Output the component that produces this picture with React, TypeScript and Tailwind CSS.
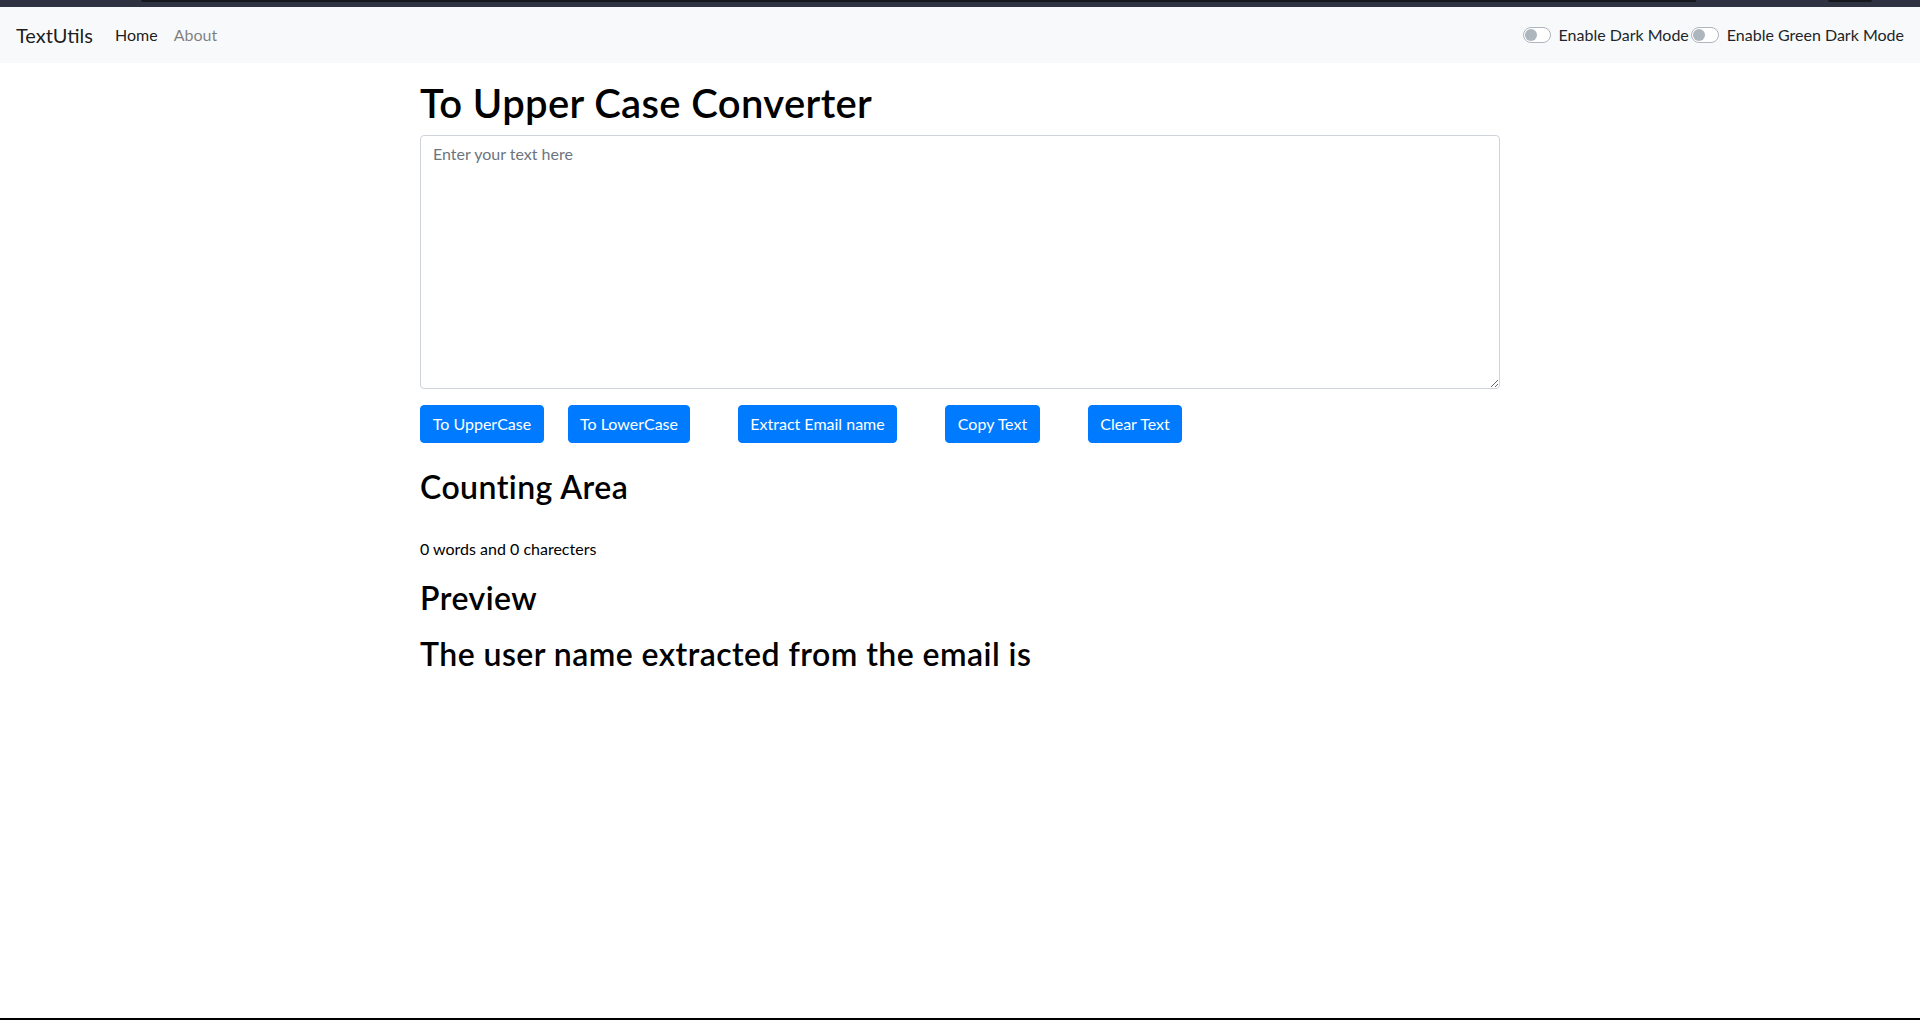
import React from 'react';

const Switch = ({ label }: { label: string }) => (
  <label className="flex items-center">
    <span className="relative block w-[28px] h-[16px] rounded-full border border-[#adb5bd] bg-white">
      <span className="absolute left-[1px] top-[1px] w-[12px] h-[12px] rounded-full bg-[#adb5bd]" />
    </span>
    <span className="ml-[8px] text-[16px] leading-[24px] text-[#212529]">{label}</span>
  </label>
);

const buttons = [
  { text: 'To UpperCase', cls: 'w-[124px]' },
  { text: 'To LowerCase', cls: 'w-[122px] ml-[24px]' },
  { text: 'Extract Email name', cls: 'w-[159px] ml-[48px]' },
  { text: 'Copy Text', cls: 'w-[95px] ml-[48px]' },
  { text: 'Clear Text', cls: 'w-[94px] ml-[48px]' },
];

export default function App() {
  return (
    <div className="min-h-[1020px] flex flex-col bg-white text-black font-['Lato','Liberation_Sans',sans-serif]">
      {/* window chrome strip */}
      <div className="h-[7px] flex bg-[#2f3241]">
        <div className="w-[141px]" />
        <div className="w-[1555px] h-[2px] bg-[#17181e] rounded-bl" />
        <div className="w-[132px]" />
        <div className="w-[44px] h-[2px] bg-[#17181e] rounded-b" />
      </div>

      <nav className="h-[56px] flex items-center px-4 bg-[#f8f9fa]">
        <a className="text-[20px] leading-[30px] text-black/90 mr-[14px]">TextUtils</a>
        <a className="px-2 text-[16px] leading-[24px] text-black/90">Home</a>
        <a className="px-2 text-[16px] leading-[24px] text-black/50">About</a>
        <div className="ml-auto flex items-center gap-[2px]">
          <Switch label="Enable Dark Mode" />
          <Switch label="Enable Green Dark Mode" />
        </div>
      </nav>

      <main className="flex-1">
        <div className="w-[1080px] mx-auto mt-4">
          <h1 className="text-[40px] leading-[48px] font-semibold tracking-[0.35px] mb-2">To Upper Case Converter</h1>
          <textarea
            className="block w-full h-[254px] border border-[#ced4da] rounded px-3 py-1.5 text-[16px] leading-[24px] placeholder:text-[#6c757d] outline-none"
            placeholder="Enter your text here"
          />
          <div className="flex mt-4">
            {buttons.map((b) => (
              <button
                key={b.text}
                className={`${b.cls} h-[38px] rounded border border-[#007bff] bg-[#007bff] text-white text-[16px] leading-[24px] whitespace-nowrap`}
              >
                {b.text}
              </button>
            ))}
          </div>

          <h2 className="mt-[25px] text-[32px] leading-[38px] font-semibold tracking-[0.45px]">Counting Area</h2>
          <p className="mt-[31px] text-[16px] leading-[24px]">0 words and 0 charecters</p>
          <h2 className="mt-[18px] text-[32px] leading-[38px] font-semibold tracking-[0.45px]">Preview</h2>
          <h2 className="mt-[18px] text-[32px] leading-[38px] font-semibold tracking-[0.45px]">The user name extracted from the email is</h2>
        </div>
      </main>

      <div className="h-[2px] bg-black" />
    </div>
  );
}
